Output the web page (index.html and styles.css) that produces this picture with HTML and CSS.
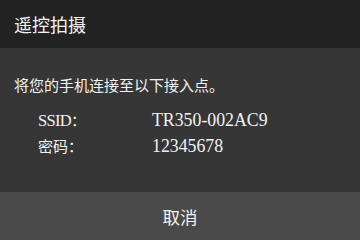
FILE: index.html
```html
<!DOCTYPE html>
<html lang="zh-CN">
<head>
<meta charset="utf-8">
<title>遥控拍摄</title>
<link rel="stylesheet" href="styles.css">
</head>
<body>
<div class="dialog">
  <div class="header">遥控拍摄</div>
  <div class="content">
    <p class="msg">将您的手机连接至以下接入点。</p>
    <div class="rows">
      <div class="label"><span class="latin label-latin">SSID</span><span class="cjk colon">：</span></div>
      <div class="value latin">TR350-002AC9</div>
      <div class="label"><span class="cjk">密码</span><span class="cjk colon">：</span></div>
      <div class="value latin">12345678</div>
    </div>
  </div>
  <div class="footer">取消</div>
</div>
</body>
</html>
```
FILE: styles.css
```css
html, body {
  margin: 0;
  padding: 0;
  width: 360px;
  height: 240px;
  overflow: hidden;
  background: #363636;
}
.dialog {
  display: flex;
  flex-direction: column;
  height: 240px;
  color: #f2f2f2;
  font-family: "Liberation Serif", "Noto Sans CJK SC", serif;
}
.header {
  height: 48px;
  flex: none;
  display: flex;
  align-items: center;
  padding-left: 14px;
  background: #222222;
  font-family: "Noto Sans CJK SC", sans-serif;
  font-size: 18px;
}
.content {
  flex: 1;
  background: #363636;
  padding-top: 27px;
}
.msg {
  margin: 0;
  padding-left: 14px;
  font-family: "Noto Sans CJK SC", sans-serif;
  font-size: 15px;
  line-height: 20px;
}
.rows {
  display: grid;
  grid-template-columns: 114px auto;
  grid-auto-rows: 26px;
  padding-left: 38px;
  margin-top: 12px;
  line-height: 26px;
}
.cjk {
  font-family: "Noto Sans CJK SC", sans-serif;
  font-size: 15px;
}
.colon {
  font-family: "Noto Sans CJK JP", sans-serif;
}
.latin {
  font-family: "Liberation Serif", serif;
  font-size: 17.8px;
}
.label-latin {
  font-size: 16.5px;
  letter-spacing: -0.7px;
}
.footer {
  height: 48px;
  flex: none;
  display: flex;
  align-items: center;
  justify-content: center;
  background: #4a4a4a;
  font-family: "Noto Sans CJK SC", sans-serif;
  font-size: 17.5px;
}
```
